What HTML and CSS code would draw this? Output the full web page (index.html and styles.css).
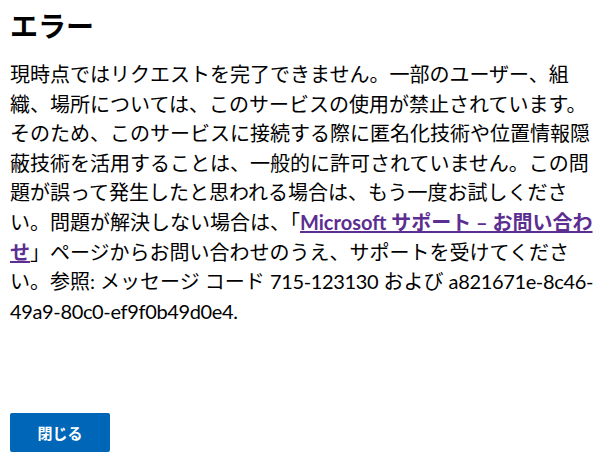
FILE: index.html
```html
<!DOCTYPE html>
<html lang="ja">
<head>
<meta charset="utf-8">
<title>エラー</title>
<link rel="stylesheet" href="styles.css">
</head>
<body>
<main class="dialog">
  <h1 class="title">エラー</h1>
  <p class="message">現時点ではリクエストを完了できません。一部のユーザー、組織、場所については、このサービスの使用が禁止されています。そのため、このサービスに接続する際に匿名化技術や位置情報隠蔽技術を活用することは、一般的に許可されていません。この問題が誤って発生したと思われる場合は、もう一度お試しください。問題が解決しない場合は、「<a class="link" href="#">Microsoft サポート – お問い合わせ</a>」ページからお問い合わせのうえ、サポートを受けてください。参照: メッセージ コード <span class="code">715-123130</span> および <span class="code">a821671e-8c46-49a9-80c0-ef9f0b49d0e4.</span></p>
  <div class="actions">
    <button class="btn" type="button">閉じる</button>
  </div>
</main>
</body>
</html>
```

FILE: styles.css
```css
html, body {
  margin: 0;
  padding: 0;
  background: #ffffff;
}

body {
  font-family: Lato, "Noto Sans CJK JP", sans-serif;
  color: #000000;
}

.dialog {
  padding: 0 10px;
  width: 587px;
  box-sizing: content-box;
}

.title {
  margin: 7px 0 0;
  font-family: "Noto Sans CJK JP", sans-serif;
  font-size: 28px;
  line-height: 36px;
  font-weight: 700;
}

.message {
  margin: 17px 0 0;
  font-size: 20px;
  line-height: 29.6px;
}

.code {
  letter-spacing: -0.35px;
}

.link {
  color: #5c2e91;
  font-weight: 700;
  text-decoration: underline;
}

.actions {
  margin-top: 87px;
  display: flex;
}

.btn {
  width: 100px;
  height: 39px;
  background: #0067b8;
  color: #ffffff;
  border: none;
  border-radius: 2px;
  font-family: "Noto Sans CJK JP", sans-serif;
  font-size: 15px;
  font-weight: 700;
  padding: 0;
}
```
